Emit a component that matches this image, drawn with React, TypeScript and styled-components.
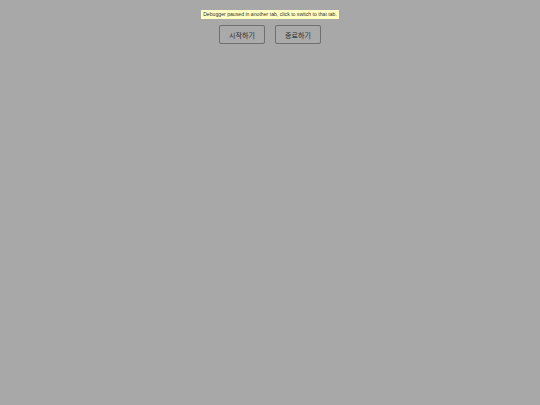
import React from "react";
import styled, { createGlobalStyle } from "styled-components";

const GlobalStyle = createGlobalStyle`
  html, body {
    margin: 0;
    padding: 0;
    background: #a8a8a8;
    font-family: "Liberation Sans", "Noto Sans CJK KR", sans-serif;
  }
`;

const Page = styled.div`
  width: 540px;
  height: 405px;
  display: flex;
  flex-direction: column;
  align-items: center;
  padding-top: 10px;
  box-sizing: border-box;
`;

const Notice = styled.div`
  background: #ffffc2;
  color: #333;
  font-size: 5.15px;
  line-height: 9px;
  height: 9px;
  padding: 0 2px;
  white-space: nowrap;
`;

const ButtonRow = styled.div`
  display: flex;
  gap: 10px;
  margin-top: 6px;
`;

const ActionButton = styled.button`
  width: 46px;
  height: 19px;
  padding: 0;
  background: #aaaaaa;
  border: 1px solid #6f6f6f;
  border-radius: 2px;
  color: #2e2e2e;
  font-family: "Liberation Sans", "Noto Sans CJK KR", sans-serif;
  font-size: 7px;
  cursor: pointer;
`;

const App = () => {
  return (
    <Page>
      <GlobalStyle />
      <Notice>Debugger paused in another tab, click to switch to that tab.</Notice>
      <ButtonRow>
        <ActionButton>시작하기</ActionButton>
        <ActionButton>종료하기</ActionButton>
      </ButtonRow>
    </Page>
  );
};

export default App;
